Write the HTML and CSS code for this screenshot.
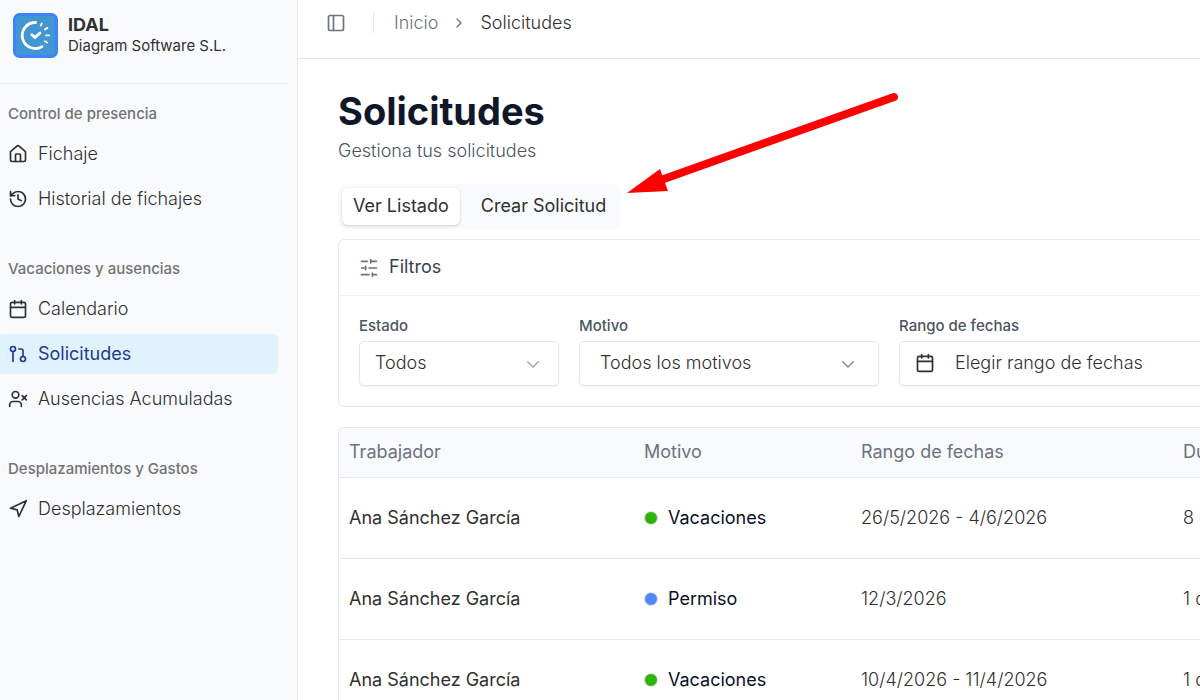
FILE: index.html
```html
<!DOCTYPE html>
<html lang="es">
<head>
    <meta charset="UTF-8">
    <meta name="viewport" content="width=device-width, initial-scale=1.0">
    <title>Solicitudes</title>
    <link rel="stylesheet" href="styles.css">
</head>
<body>

<div class="app">
    <aside class="sidebar">
        <div class="brand">
            <svg class="brand-logo" viewBox="0 0 45 45" fill="none" stroke="#fff" stroke-linecap="round">
                <rect x="1.5" y="1.5" width="42" height="42" rx="5" fill="#4197d3" stroke="#3f83f8" stroke-width="3"/>
                <path d="M22.6 9.5A13 13 0 1 0 29 33.6" stroke-width="2.8"/>
                <path d="M18.8 21.8l3 2.8 5.2-4.6" stroke-width="2.8" stroke-linejoin="round"/>
                <path d="M27.8 12.6l1-2.2M32 16.4l2.4-1.5M33 22.4h3.2M32 28.2l2.2 1.3" stroke-width="1.9"/>
            </svg>
            <div class="brand-text">
                <strong>IDAL</strong>
                <span>Diagram Software S.L.</span>
            </div>
        </div>

        <nav class="menu">
            <section class="menu-group">
                <h2>Control de presencia</h2>
                <a href="#">
                    <svg class="icon" viewBox="0 0 24 24"><path d="M15 21v-8a1 1 0 0 0-1-1h-4a1 1 0 0 0-1 1v8"/><path d="M3 10a2 2 0 0 1 .709-1.528l7-5.999a2 2 0 0 1 2.582 0l7 5.999A2 2 0 0 1 21 10v9a2 2 0 0 1-2 2H5a2 2 0 0 1-2-2z"/></svg>
                    Fichaje
                </a>
                <a href="#">
                    <svg class="icon" viewBox="0 0 24 24"><path d="M3 12a9 9 0 1 0 9-9 9.75 9.75 0 0 0-6.74 2.74L3 8"/><path d="M3 3v5h5"/><path d="M12 7v5l4 2"/></svg>
                    Historial de fichajes
                </a>
            </section>

            <section class="menu-group">
                <h2>Vacaciones y ausencias</h2>
                <a href="#">
                    <svg class="icon" viewBox="0 0 24 24"><path d="M8 2v4M16 2v4M3 10h18"/><rect x="3" y="4" width="18" height="18" rx="2"/></svg>
                    Calendario
                </a>
                <a href="#" class="active">
                    <svg class="icon" viewBox="0 0 24 24"><circle cx="18" cy="18" r="3"/><circle cx="6" cy="6" r="3"/><path d="M13 6h3a2 2 0 0 1 2 2v7M6 9v12"/></svg>
                    Solicitudes
                </a>
                <a href="#">
                    <svg class="icon" viewBox="0 0 24 24"><path d="M16 21v-2a4 4 0 0 0-4-4H6a4 4 0 0 0-4 4v2"/><circle cx="9" cy="7" r="4"/><path d="M17 8l5 5M22 8l-5 5"/></svg>
                    Ausencias Acumuladas
                </a>
            </section>

            <section class="menu-group">
                <h2>Desplazamientos y Gastos</h2>
                <a href="#">
                    <svg class="icon" viewBox="0 0 24 24"><path d="M3 11l19-9-9 19-2-8z"/></svg>
                    Desplazamientos
                </a>
            </section>
        </nav>
    </aside>

    <main class="main">
        <header class="topbar">
            <button class="toggle" aria-label="Menú">
                <svg class="icon" viewBox="0 0 24 24"><rect x="3" y="3" width="18" height="18" rx="2"/><path d="M9 3v18"/></svg>
            </button>
            <nav class="breadcrumb">
                <a href="#">Inicio</a>
                <svg class="icon chevron" viewBox="0 0 24 24"><path d="M9 18l6-6-6-6"/></svg>
                <span>Solicitudes</span>
            </nav>
        </header>

        <div class="content">
            <h1>Solicitudes</h1>
            <p class="subtitle">Gestiona tus solicitudes</p>

            <div class="tabs">
                <button class="tab selected">Ver Listado</button>
                <button class="tab">Crear Solicitud</button>
            </div>

            <section class="filters">
                <h3>
                    <svg class="icon" viewBox="0 0 24 24"><path d="M21 4h-7M10 4H3M21 12h-9M8 12H3M21 20h-5M12 20H3M14 2v4M8 10v4M16 18v4"/></svg>
                    <span>Filtros</span>
                </h3>
                <div class="filter-fields">
                    <div class="field field-estado">
                        <label for="estado">Estado</label>
                        <div class="select">
                            <select id="estado"><option>Todos</option></select>
                            <svg class="icon" viewBox="0 0 24 24"><path d="M5 9l7 7 7-7"/></svg>
                        </div>
                    </div>
                    <div class="field field-motivo">
                        <label for="motivo">Motivo</label>
                        <div class="select">
                            <select id="motivo"><option>Todos los motivos</option></select>
                            <svg class="icon" viewBox="0 0 24 24"><path d="M5 9l7 7 7-7"/></svg>
                        </div>
                    </div>
                    <div class="field field-fechas">
                        <label for="fechas">Rango de fechas</label>
                        <button id="fechas" class="date-button">
                            <svg class="icon" viewBox="0 0 24 24"><path d="M8 2v4M16 2v4M3 10h18"/><rect x="3" y="4" width="18" height="18" rx="2"/></svg>
                            Elegir rango de fechas
                        </button>
                    </div>
                </div>
            </section>

            <div class="table-box">
                <table>
                    <thead>
                        <tr>
                            <th class="col-trabajador">Trabajador</th>
                            <th class="col-motivo">Motivo</th>
                            <th class="col-fechas">Rango de fechas</th>
                            <th>Duración</th>
                        </tr>
                    </thead>
                    <tbody>
                        <tr>
                            <td class="name">Ana Sánchez García</td>
                            <td><span class="reason green">Vacaciones</span></td>
                            <td>26/5/2026 - 4/6/2026</td>
                            <td>8 días</td>
                        </tr>
                        <tr>
                            <td class="name">Ana Sánchez García</td>
                            <td><span class="reason blue">Permiso</span></td>
                            <td>12/3/2026</td>
                            <td>1 día</td>
                        </tr>
                        <tr>
                            <td class="name">Ana Sánchez García</td>
                            <td><span class="reason green">Vacaciones</span></td>
                            <td>10/4/2026 - 11/4/2026</td>
                            <td>1 día</td>
                        </tr>
                    </tbody>
                </table>
            </div>
        </div>
    </main>
</div>

<!-- Flecha hacia "Crear Solicitud" -->
<svg class="arrow" viewBox="0 0 280 120">
    <path d="M273 17L40 100" stroke="#f00" stroke-width="8" stroke-linecap="round"/>
    <path d="M6 113L39 89L47 111Z" fill="#f00"/>
</svg>

</body>
</html>
```

FILE: styles.css
```css
* {
    box-sizing: border-box;
}

body {
    margin: 0;
    font-family: Inter, "Liberation Sans", sans-serif;
    font-size: 18px;
    line-height: 24px;
    color: #303030;
    background: #fff;
}

h1, h2, h3, p {
    margin: 0;
}

a {
    color: inherit;
    text-decoration: none;
}

button, select {
    font: inherit;
    color: inherit;
    cursor: pointer;
}

.icon {
    width: 20px;
    height: 20px;
    flex: none;
    fill: none;
    stroke: currentColor;
    stroke-width: 2;
    stroke-linecap: round;
    stroke-linejoin: round;
}

.app {
    display: flex;
    height: 100vh;
    overflow: hidden;
}

/* Sidebar */
.sidebar {
    width: 298px;
    flex: none;
    padding-right: 9px;
    background: #f9fafc;
    border-right: 1px solid #e5e7eb;
}

.brand {
    display: flex;
    gap: 10px;
    padding: 13px 13px 25px;
    border-bottom: 1px solid #eceef1;
}

.brand-logo {
    width: 45px;
    height: 45px;
}

.brand-text {
    display: flex;
    flex-direction: column;
    font-size: 15px;
    line-height: 18px;
}

.brand-text strong {
    font-size: 18px;
    line-height: 24px;
}

.menu {
    display: flex;
    flex-direction: column;
    gap: 30px;
    padding: 10px 10px 10px 0;
}

.menu-group {
    display: flex;
    flex-direction: column;
    gap: 5px;
}

.menu-group h2 {
    margin-bottom: -5px;
    padding-left: 8px;
    font-size: 15px;
    font-weight: 500;
    line-height: 40px;
    color: #737373;
}

.menu-group a {
    display: flex;
    align-items: center;
    gap: 10px;
    height: 40px;
    padding-left: 8px;
    border-radius: 2px 5px 5px 2px;
    font-weight: 300;
}

.menu-group a.active {
    background: #e0f2fe;
    color: #1e3a8a;
    font-weight: 400;
}

/* Main */
.main {
    flex: 1;
    min-width: 0;
    overflow: hidden;
}

.topbar {
    display: flex;
    align-items: center;
    height: 59px;
    padding: 0 28px 13px;
    border-bottom: 1px solid #e5e7eb;
}

.toggle {
    display: flex;
    padding: 0;
    border: none;
    background: none;
    color: #6b7280;
}

.breadcrumb {
    display: flex;
    align-items: center;
    gap: 13px;
    margin-left: 27px;
    padding-left: 20px;
    border-left: 1px solid #e5e7eb;
    line-height: 20px;
    font-weight: 300;
}

.breadcrumb a,
.chevron {
    color: #6b7280;
}

.chevron {
    width: 16px;
    height: 16px;
}

.content {
    min-width: 1160px;
    padding: 32px 40px;
}

h1 {
    font-size: 38px;
    font-weight: 700;
    line-height: 40px;
    color: #0f172a;
}

.subtitle {
    margin-top: 8px;
    font-weight: 300;
    color: #4b5563;
}

.tabs {
    display: inline-flex;
    gap: 10px;
    margin: 21px 0 10px;
    padding: 4px;
    border-radius: 8px;
    background: #f9fafc;
    vertical-align: top;
}

.tab {
    height: 37px;
    padding: 0 11px 2px;
    border: none;
    border-radius: 6px;
    background: none;
    font-weight: 400;
}

.tab.selected {
    background: #fff;
    box-shadow: 0 1px 3px rgba(0, 0, 0, 0.18);
}

.filters {
    border: 1px solid #e5e7eb;
    border-radius: 6px;
}

.filters h3 {
    display: flex;
    align-items: center;
    gap: 10px;
    height: 56px;
    padding: 0 20px;
    border-bottom: 1px solid #f0f1f3;
    font-size: 18px;
    font-weight: 400;
    color: #374151;
}

.filters h3 span {
    padding-bottom: 2px;
}

.filters h3 .icon {
    color: #6b7280;
}

.filter-fields {
    display: flex;
    gap: 20px;
    padding: 20px;
}

.field label {
    display: block;
    margin-bottom: 5px;
    font-size: 15px;
    font-weight: 500;
    line-height: 20px;
    color: #4b5563;
}

.field-estado {
    width: 200px;
}

.field-motivo {
    width: 300px;
}

.field-fechas {
    flex: 1;
}

.select {
    display: grid;
    align-items: center;
}

.select select,
.select .icon {
    grid-area: 1 / 1;
}

.select .icon {
    justify-self: end;
    width: 18px;
    height: 18px;
    margin-right: 17px;
    color: #a3a7af;
    pointer-events: none;
}

.field-motivo .select .icon {
    margin-right: 22px;
    color: #8a8a8a;
}

.select select,
.date-button {
    width: 100%;
    height: 45px;
    padding: 0 15px 2px;
    border: 1px solid #e5e7eb;
    border-radius: 5px;
    background: #fff;
    box-shadow: 0 1px 2px rgba(0, 0, 0, 0.06);
    font-weight: 300;
    appearance: none;
}

.field-motivo .select select {
    padding: 0 20px 2px;
}

.date-button {
    display: flex;
    align-items: center;
    gap: 20px;
}

.table-box {
    margin-top: 20px;
    border: 1px solid #e5e7eb;
    border-radius: 6px;
    overflow: hidden;
}

table {
    width: 100%;
    table-layout: fixed;
    border-collapse: collapse;
}

th, td {
    height: 81px;
    padding: 0 10px;
    border-bottom: 1px solid #e5e7eb;
    text-align: left;
    font-weight: 300;
}

th {
    height: 49px;
    background: #f9fafc;
    font-weight: 400;
    color: #6b7280;
}

.col-trabajador {
    width: 295px;
}

.col-motivo {
    width: 217px;
}

.col-fechas {
    width: 322px;
}

.name {
    font-weight: 400;
}

.reason {
    display: flex;
    align-items: center;
    gap: 10px;
    font-weight: 400;
    color: #0a0f1f;
}

.reason::before {
    content: "";
    width: 12px;
    height: 12px;
    border-radius: 50%;
    border: 1px solid #e5e7eb;
}

.green::before {
    background: #2fb309;
}

.blue::before {
    background: #5584ff;
}

.arrow {
    position: absolute;
    left: 621px;
    top: 80px;
    width: 280px;
    height: 120px;
    fill: none;
    pointer-events: none;
}
```
